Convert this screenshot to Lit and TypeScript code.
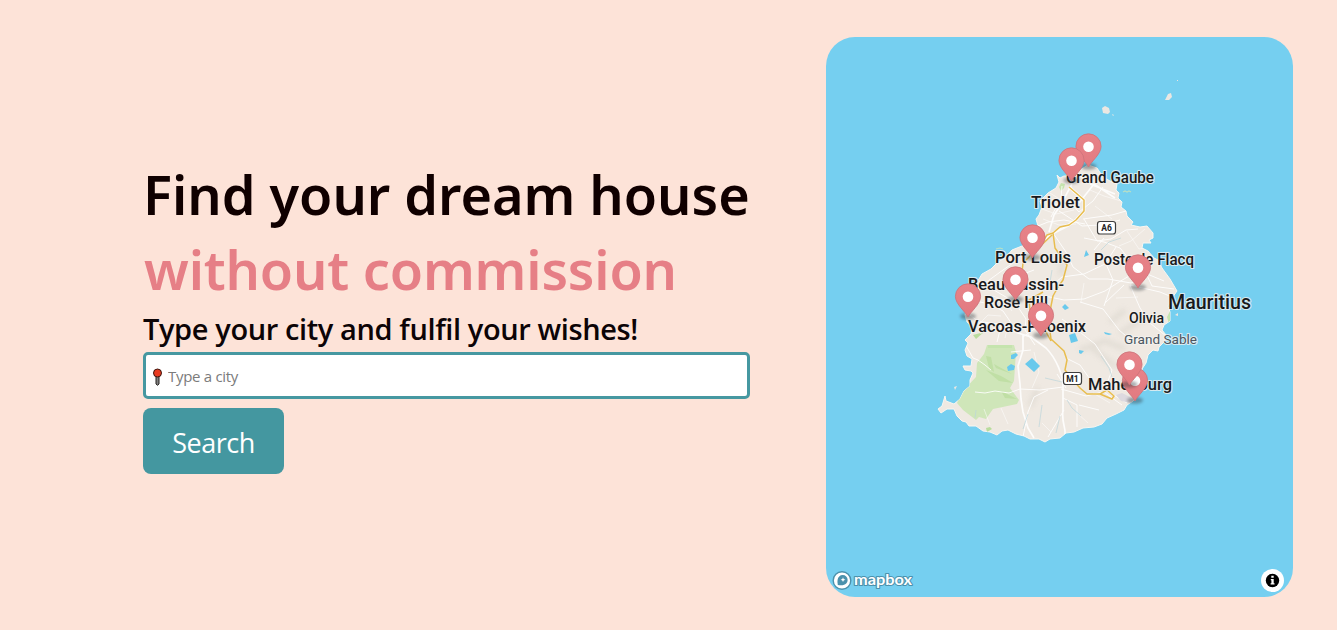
import { LitElement, html, css, svg } from "lit";
import { customElement } from "lit/decorators.js";

interface Label {
  text: string;
  x: number;
  y: number;
  width: number;
  size: number;
  minor?: boolean;
}

const LABELS: Label[] = [
  { text: "Grand Gaube", x: 1066, y: 183, width: 88, size: 16 },
  { text: "Triolet", x: 1031, y: 208, width: 49, size: 16.5 },
  { text: "Port Louis", x: 995, y: 263, width: 76, size: 16.5 },
  { text: "Poste de Flacq", x: 1094, y: 265, width: 100, size: 16 },
  { text: "Beau Bassin-", x: 968, y: 290, width: 96, size: 16.5 },
  { text: "Rose Hill", x: 984, y: 308, width: 64, size: 16.5 },
  { text: "Vacoas-Phoenix", x: 968, y: 332, width: 118, size: 16.5 },
  { text: "Mauritius", x: 1168, y: 309, width: 83, size: 20 },
  { text: "Olivia", x: 1129, y: 323, width: 35, size: 14.5 },
  { text: "Grand Sable", x: 1124, y: 344, width: 73, size: 13.5, minor: true },
  { text: "Mahebourg", x: 1088, y: 390, width: 84, size: 16.5 },
];

// Tip of each pin.
const PINS = [
  [1088.5, 166], [1071.5, 180], [1032.5, 257], [1015.5, 299],
  [968, 316], [1138, 287], [1041, 335], [1135, 400], [1129.5, 384],
];

const COAST =
  "M1057 175L1060 178L1064 176L1068 176L1080 170L1088 165L1097 168L1103 177L1110 181L1117 184L1116 190L1119 193L1118 198L1122 202L1121 207L1126 211L1127 216L1133 222L1131 225L1140 227L1147 226L1153 233L1153 238L1149 240L1151 243L1143 243L1142 248L1148 251L1154 258L1158 260L1162 268L1170 279L1177 291L1172 298L1168 306L1170 312L1170 321L1164 325L1162 330L1166 335L1165 341L1159 347L1158 351L1153 350L1148 355L1146 363L1142 369L1144 381L1140 393L1133 401L1127 405L1124 410L1116 414L1107 418L1102 424L1094 427L1083 428L1074 432L1066 433L1060 438L1050 439L1045 442L1039 439L1030 439L1024 436L1016 434L1008 430L1002 431L997 435L990 432L983 431L976 426L969 426L966 422L962 421L957 416L954 409L947 409L941 413L938 409L942 406L945 396L946 401L954 404L960 399L964 391L970 386L970 380L973 373L971 371L965 370L963 366L971 366L972 359L967 356L965 350L968 343L965 340L971 334L972 326L967 322L965 315L968 303L970 287L979 279L982 274L991 269L998 262L1005 258L1012 250L1022 246L1031 243L1036 234L1038 226L1036 219L1039 215L1042 207L1040 201L1048 193L1056 188L1059 182Z";

@customElement("town-map")
export class TownMap extends LitElement {
  static styles = css`
    :host { display: block; border-radius: 29px; overflow: hidden; background: #75cff0; }
    svg { display: block; width: 100%; height: 100%; }
    .label {
      font-family: Roboto, "Liberation Sans", sans-serif; font-weight: 500; fill: #191a1c;
      stroke: #f5f3f0; stroke-width: 2.2; stroke-linejoin: round; paint-order: stroke;
    }
    .minor { fill: #4b5560; font-weight: 400; }
    .minor, .label { stroke-opacity: 0.75; }
    .shield { font: 700 8.5px Roboto, sans-serif; fill: #222; text-anchor: middle; }
    .brand { font: 700 14.5px Lato, sans-serif; fill: #fff; stroke: #4b91ac; stroke-width: 2; stroke-linejoin: round; paint-order: stroke; }
  `;

  render() {
    return html`<svg viewBox="826 37 467 560">
      <defs>
        <clipPath id="land"><path d=${COAST} /></clipPath>
        <filter id="soft" x="-40%" y="-60%" width="180%" height="220%"><feGaussianBlur stdDeviation="1.6" /></filter>
        <filter id="relief"><feGaussianBlur stdDeviation="2.5" /></filter>
        <linearGradient id="pinFill" x2="0" y2="1"><stop stop-color="#e78389" /><stop offset="1" stop-color="#e27a80" /></linearGradient>
      </defs>
      <path d=${COAST} fill="#efe9e2" stroke="#f8f6f1" stroke-width="1" stroke-linejoin="round" />
      <g fill="#ebe7e2">
        <path d="M1102 108l3-2 4 2 1 4-2 2-5-1zM1112 114l2 1-1 1zM1168 94l3-1 1 4-3 3-4 0zM1177 80h1v1h-1zM954 387l3-1-2 4zM1175 315l3-2v3z" />
      </g>
      <path d="M1123 192l2-1 2 1 2-1 2 1M996 249l4-1 3 1" fill="none" stroke="#b9dfc4" stroke-width="1.2" />
      <g clip-path="url(#land)">
        <g fill="none" stroke="#ded9d0" filter="url(#relief)" stroke-width="5" opacity=".75">
          <path d="M1055 260q12-6 5 15M1125 310l-15 12M1080 350l25-9 20 8M1030 406l8-18M1091 347l25 20M1144 318l-24 15" />
        </g>
        <path fill="#cfe6b9" d="M987 345h27l2 7-2 29-4 7 9 12-2 4-24 5-7 10-7-2-3 3-13-10-6-7 4-10 15-16 1-14 7-9z" />
        <path fill="#b9dc9d" opacity=".7" d="M986 370l13 11 14 2-12-7zM994 364l18 10-16-6zM986 356l3 12 5 4-3-15zM1001 391l16 8-12-1z" />
        <path fill="#b9dc9d" d="M973 335l11-3-8 7zM986 428l4-1 2 2-5 3z" />
        <path fill="#c5e4ae" d="M988 345h24v3h-24zM1061 183l4 1-1 4-3 3-2-4zM1167 317l3-6 1 6-2 7z" />
        <g fill="none" stroke="#fff" stroke-width="1" stroke-linejoin="round" opacity=".85">
          <path stroke-width="1.7" d="M1064 438C1068 430 1061 425 1063 410V389C1064 375 1055 357 1046 348L1031 337L1018 333L998 324L980 322M1023 335V350L1018 366L1020 384L1021 399L1023 412L1028 428L1034 438M1072 184L1060 206L1054 215L1049 232M1079 203L1094 184L1115 198M1085 180L1078 173M1090 184L1115 194" />
          <path d="M965 344L973 358L978 360L985 365L991 370M975 392L985 393L995 391L1009 393L1020 389L1040 390L1063 387M970 300L990 304L1003 311L1018 333M970 315L979 322L981 334M981 286L1003 270L1013 263M1038 226L1048 222L1064 220L1085 224M1059 211L1082 226L1100 225L1120 220M1084 219L1097 241L1111 239L1126 230L1138 229M1084 238L1104 242L1120 248L1130 260M1053 233L1066 252L1073 267L1089 279L1108 279L1131 283L1144 278M1045 296L1064 300L1084 299L1105 291L1119 282L1136 272L1139 255M1049 288L1062 277L1084 274L1105 264L1116 247M1080 302L1103 309L1119 330L1133 342L1152 339M1130 285L1140 308L1150 323L1166 336M1143 267L1152 286L1174 289M1140 271L1164 281M1130 285L1160 292L1172 297M1105 303L1124 285M1094 250L1104 238M1106 264L1113 280L1104 306M1062 319L1081 333L1095 344L1112 370L1104 392L1122 405M1061 389L1086 396L1107 391L1127 403M1066 358L1080 365L1094 385M1057 374L1066 388M1063 398L1077 405L1077 427M1079 405L1099 410M1048 390L1034 397L1028 412L1023 437M1064 410L1048 437M1001 326L997 342M1031 350L1011 352M1035 345L1025 330L1026 319L1018 307L1011 300L987 286M1034 270L1018 276L1004 273M1028 310L1041 319L1059 329M1040 325L1023 337M1051 217L1061 198L1062 186M1070 202L1079 212L1093 201L1103 187M1083 219L1112 215L1126 211" />
          <path opacity=".6" d="M1042 209L1056 214L1074 210M1043 219L1059 225L1076 224M1050 193L1064 202L1082 197M1047 200L1057 205L1070 204M1090 190L1104 196L1121 201M1095 206L1112 219M1127 231L1139 249L1150 247M1145 229L1131 241L1119 246M1084 283L1081 302M1116 298L1138 297M974 303L979 291M993 296L1004 300L1012 311M979 324L988 315L1001 316M1008 325L1005 338M1034 352L1039 372L1032 388M984 409L990 425M1001 408L1008 424M1042 423L1051 432M1077 413L1088 423M1093 393L1110 403" />
        </g>
        <g fill="none" stroke="#bcd5db" stroke-width=".7">
          <path d="M1067 400l5 8 9 8M1101 250l8-8 12-4M1101 356l8 12 3 9M1045 378l17 4M1042 405l-3 22M1060 416l-4 17M1028 414l-5 15M975 418l1-8M1052 270l-3 18" />
        </g>
        <g fill="#69c9ec">
          <path d="M1011 355l5-2 2 2-4 4h-3zM1007 367l4-3 4 2-1 4-6 1zM1025 364l7-6 8 8-6 6zM1086 250l3 5-5 2zM1062 307l3-3 4 4-4 2zM1069 335l6-2 3 8-7 2zM1079 350l5 1-3 3-2-1zM1104 332l8 2-3 1-4-1z" />
        </g>
        <path fill="#ddd9df" d="M1116 395l6-2 12 6-3 4-10-2z" />
        <g fill="none" stroke="#fff" stroke-width="3" stroke-linejoin="round" opacity=".8">
          <path d="M1069 187L1084 200V211L1076 220L1067 226L1053 233L1043 240" />
        </g>
        <g fill="none" stroke="#e8bd4e" stroke-width="1.5" stroke-linejoin="round">
          <path d="M1069 187L1076 193L1084 200V211L1076 220L1069 225L1060 227L1053 233L1047 235L1043 241M1053 233L1055 248L1067 265L1063 280L1058 287L1053 296L1051 306L1049 324L1051 339L1064 351L1067 360L1065 370L1073 380L1080 388L1087 394L1100 394L1107 390L1114 396L1112 399L1100 394M1052 235L1031 255L1023 263L1022 272M1043 292L1029 300L1030 310L1040 321L1051 341" />
        </g>
      </g>
      <g fill="#fff" stroke="#3d3d3d" stroke-width="1.2">
        <rect x="1097.5" y="221.5" width="18" height="12.5" rx="2.5" />
        <rect x="1063.5" y="372.5" width="18" height="12" rx="2.5" />
      </g>
      <text class="shield" x="1106.5" y="231">A6</text>
      <text class="shield" x="1072.5" y="381.5">M1</text>
      ${LABELS.map((l) => svg`<text class=${l.minor ? "label minor" : "label"} x=${l.x} y=${l.y}
        font-size=${l.size} textLength=${l.width} lengthAdjust="spacingAndGlyphs">${l.text}</text>`)}
      ${PINS.map(([x, y]) => svg`<g transform="translate(${x} ${y})">
        <ellipse cy=".3" rx="8" ry="3.4" fill="#343b40" opacity=".42" filter="url(#soft)" />
        <path d="M0 1C-2.2-4-12.6-11.8-12.6-19.6A12.6 12.6 0 0 1 12.6-19.6C12.6-11.8 2.2-4 0 1Z" fill="url(#pinFill)" stroke="#cb7279" stroke-width=".8" />
        <circle cy="-19.3" r="5.3" fill="#fff" />
      </g>`)}
      <circle cx="842" cy="580.5" r="8.8" fill="#fff" stroke="#4b91ac" stroke-width="1.4" />
      <path d="M837.8 585c-.8-4.5-.2-7 1.4-8.5a4.9 4.9 0 0 1 7 7c-1.7 1.7-4.3 2.3-8.4 1.5Z" fill="#4b91ac" />
      <path d="M843 577.3l.7 1.7 1.7.7-1.7.7-.7 1.7-.7-1.7-1.7-.7 1.7-.7z" fill="#fff" />
      <text class="brand" x="854" y="585" textLength="58" lengthAdjust="spacingAndGlyphs">mapbox</text>
      <circle cx="1272.5" cy="580.5" r="11.5" fill="#fff" />
      <circle cx="1272.5" cy="580.5" r="6.7" fill="#000" />
      <path d="M1271.3 575.8h2.4v2h-2.4zM1270.8 578.9h2.9v4.3h.8v1.3h-3.9v-1.3h.8v-3h-.6z" fill="#fff" />
    </svg>`;
  }
}

@customElement("app-root")
export class AppRoot extends LitElement {
  static styles = css`
    :host {
      display: flex; box-sizing: border-box; height: 630px; padding: 37px 44px 33px 143px;
      justify-content: space-between; background: #fde3d8; overflow: hidden;
      font-family: "Open Sans", "Noto Sans", sans-serif;
    }
    * { box-sizing: border-box; }
    .intro { width: 607px; padding-top: 120px; }
    .title { margin: 0; font: 600 54px/75px "Noto Sans", sans-serif; color: #100000; white-space: nowrap; }
    .line { display: block; }
    .first { letter-spacing: -0.02px; }
    .accent { padding-left: 1px; color: #e67f86; letter-spacing: -0.17px; }
    .subtitle { margin: 0 0 2px; font: 600 29px/43px "Open Sans", sans-serif; color: #0c0406; white-space: nowrap; letter-spacing: -0.39px; }
    .form { display: flex; flex-direction: column; align-items: flex-start; gap: 9px; }
    .field {
      display: flex; align-items: center; gap: 5px; width: 100%; height: 47px; padding: 2px 6px 0;
      border: 3px solid #4698a1; border-radius: 5px; background: #fff;
    }
    .pin { width: 11px; height: 18px; }
    .input {
      flex: 1; min-width: 0; border: 0; padding: 0 0 1px; outline: 0; background: none; color: #333;
      font: 15px "Open Sans", sans-serif; letter-spacing: -0.3px;
    }
    .input::placeholder { color: #7b7b7b; opacity: 1; }
    .search {
      width: 141px; height: 66px; padding: 2px 0 0; border: 0; border-radius: 8px;
      background: #4497a0; color: #fff; font: 400 27px "Open Sans", sans-serif; letter-spacing: -0.5px;
    }
    .map { width: 467px; height: 560px; }
  `;

  render() {
    return html`
      <section class="intro">
        <h1 class="title">
          <span class="line first">Find your dream house</span>
          <span class="line accent">without commission</span>
        </h1>
        <h2 class="subtitle">Type your city and fulfil your wishes!</h2>
        <div class="form">
          <label class="field">
            <svg class="pin" viewBox="0 0 11 18">
              <path d="M4 8h3v8l-1.5 1.3L4 16z" fill="#808080" stroke="#25211e" />
              <circle cx="5.5" cy="5" r="4" fill="#e93a20" stroke="#3c1710" />
            </svg>
            <input class="input" placeholder="Type a city" />
          </label>
          <button class="search">Search</button>
        </div>
      </section>
      <town-map class="map"></town-map>
    `;
  }
}
